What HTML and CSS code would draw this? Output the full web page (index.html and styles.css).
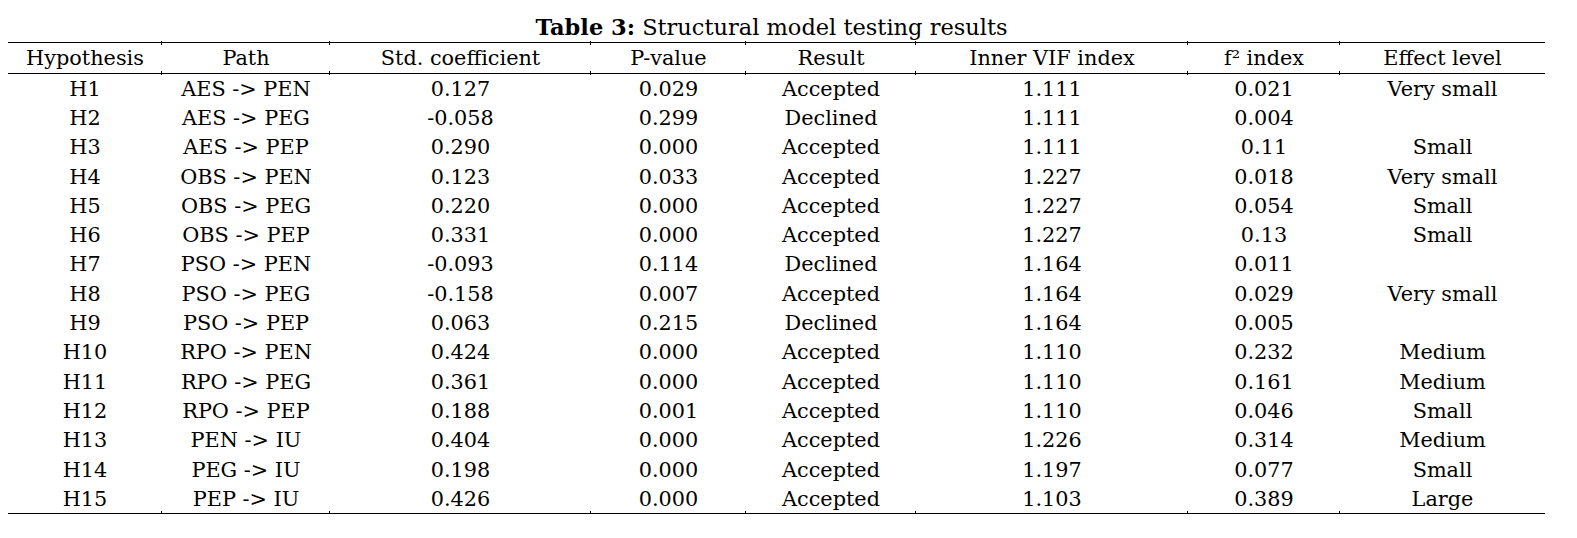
FILE: index.html
```html
<!DOCTYPE html>
<html>
<head>
<meta charset="utf-8">
<link rel="stylesheet" href="styles.css">
</head>
<body>
<div class="caption"><b>Table 3:</b> Structural model testing results</div>
<table class="results">
<colgroup>
<col class="c1"><col class="c2"><col class="c3"><col class="c4"><col class="c5"><col class="c6"><col class="c7"><col class="c8">
</colgroup>
<thead>
<tr><th>Hypothesis</th><th>Path</th><th>Std. coefficient</th><th>P-value</th><th>Result</th><th>Inner VIF index</th><th>f² index</th><th>Effect level</th></tr>
</thead>
<tbody>
<tr><td>H1</td><td>AES -&gt; PEN</td><td>0.127</td><td>0.029</td><td>Accepted</td><td>1.111</td><td>0.021</td><td>Very small</td></tr>
<tr><td>H2</td><td>AES -&gt; PEG</td><td>-0.058</td><td>0.299</td><td>Declined</td><td>1.111</td><td>0.004</td><td></td></tr>
<tr><td>H3</td><td>AES -&gt; PEP</td><td>0.290</td><td>0.000</td><td>Accepted</td><td>1.111</td><td>0.11</td><td>Small</td></tr>
<tr><td>H4</td><td>OBS -&gt; PEN</td><td>0.123</td><td>0.033</td><td>Accepted</td><td>1.227</td><td>0.018</td><td>Very small</td></tr>
<tr><td>H5</td><td>OBS -&gt; PEG</td><td>0.220</td><td>0.000</td><td>Accepted</td><td>1.227</td><td>0.054</td><td>Small</td></tr>
<tr><td>H6</td><td>OBS -&gt; PEP</td><td>0.331</td><td>0.000</td><td>Accepted</td><td>1.227</td><td>0.13</td><td>Small</td></tr>
<tr><td>H7</td><td>PSO -&gt; PEN</td><td>-0.093</td><td>0.114</td><td>Declined</td><td>1.164</td><td>0.011</td><td></td></tr>
<tr><td>H8</td><td>PSO -&gt; PEG</td><td>-0.158</td><td>0.007</td><td>Accepted</td><td>1.164</td><td>0.029</td><td>Very small</td></tr>
<tr><td>H9</td><td>PSO -&gt; PEP</td><td>0.063</td><td>0.215</td><td>Declined</td><td>1.164</td><td>0.005</td><td></td></tr>
<tr><td>H10</td><td>RPO -&gt; PEN</td><td>0.424</td><td>0.000</td><td>Accepted</td><td>1.110</td><td>0.232</td><td>Medium</td></tr>
<tr><td>H11</td><td>RPO -&gt; PEG</td><td>0.361</td><td>0.000</td><td>Accepted</td><td>1.110</td><td>0.161</td><td>Medium</td></tr>
<tr><td>H12</td><td>RPO -&gt; PEP</td><td>0.188</td><td>0.001</td><td>Accepted</td><td>1.110</td><td>0.046</td><td>Small</td></tr>
<tr><td>H13</td><td>PEN -&gt; IU</td><td>0.404</td><td>0.000</td><td>Accepted</td><td>1.226</td><td>0.314</td><td>Medium</td></tr>
<tr><td>H14</td><td>PEG -&gt; IU</td><td>0.198</td><td>0.000</td><td>Accepted</td><td>1.197</td><td>0.077</td><td>Small</td></tr>
<tr><td>H15</td><td>PEP -&gt; IU</td><td>0.426</td><td>0.000</td><td>Accepted</td><td>1.103</td><td>0.389</td><td>Large</td></tr>
</tbody>
</table>
</body>
</html>
```
FILE: styles.css
```css
html, body {
  background: #ffffff;
}
body {
  margin: 8px;
  color: #000000;
  font-family: "DejaVu Serif", "Liberation Serif", serif;
}
.caption {
  width: 1527px;
  padding-right: 10px;
  text-align: center;
  font-size: 22.5px;
  line-height: 30px;
  padding-top: 4px;
  white-space: nowrap;
}
.results {
  border-collapse: collapse;
  table-layout: fixed;
  width: 1537px;
  font-size: 20.8px;
}
.c1 { width: 154px; }
.c2 { width: 168px; }
.c3 { width: 261px; }
.c4 { width: 155px; }
.c5 { width: 170px; }
.c6 { width: 272px; }
.c7 { width: 152px; }
.c8 { width: 205px; }
.results th,
.results td {
  padding: 0;
  text-align: center;
  white-space: nowrap;
  font-weight: normal;
  vertical-align: middle;
  position: relative;
}
.results thead th {
  height: 30px;
  border-top: 1px solid #000;
  border-bottom: 1px solid #000;
}
.results tbody td {
  height: 29.3px;
}
.results tbody tr:last-child td {
  border-bottom: 1px solid #000;
}
/* small column ticks on the rules, as in the source document */
.results thead th + th::before,
.results thead th + th::after,
.results tbody tr:last-child td + td::after {
  content: "";
  position: absolute;
  left: -1px;
  width: 1px;
  height: 4px;
  background: #000;
}
.results thead th + th::before {
  top: -2px;
}
.results thead th + th::after,
.results tbody tr:last-child td + td::after {
  bottom: -2px;
}
```
